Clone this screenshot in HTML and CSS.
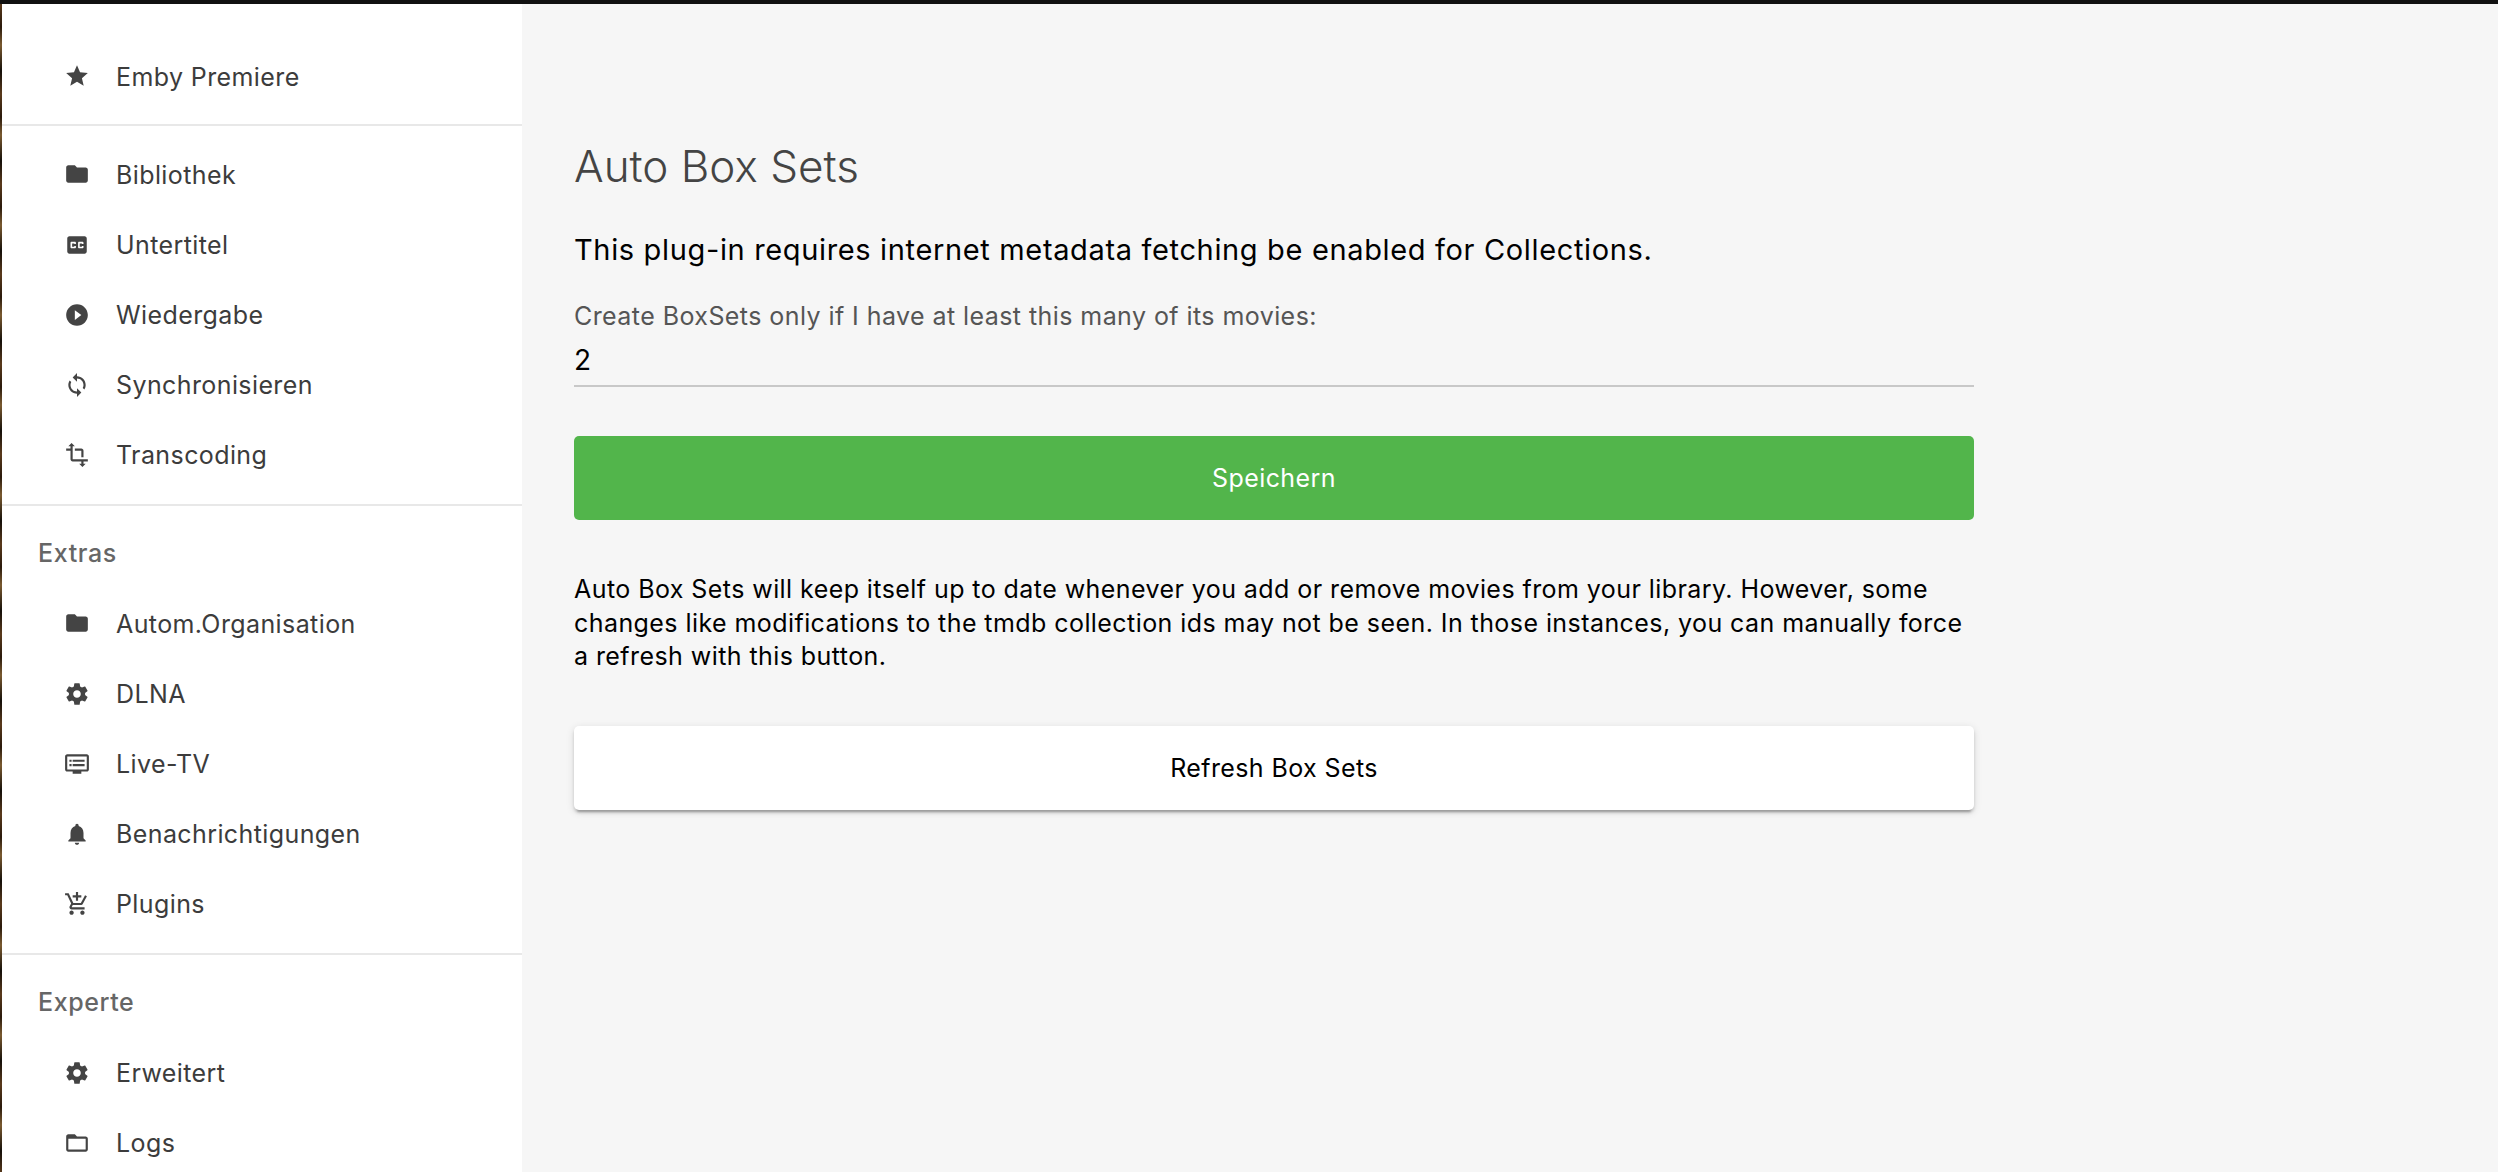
FILE: index.html
```html
<!DOCTYPE html>
<html lang="de">
<head>
    <meta charset="UTF-8">
    <title>Auto Box Sets</title>
    <link rel="stylesheet" href="styles.css">
</head>
<body>
    <div class="edge-top"></div>
    <div class="page">
        <div class="edge-left"></div>

        <nav class="sidebar">
            <div class="nav-group nav-group-first">
                <a class="nav-item"><svg class="nav-icon nav-icon-raised" viewBox="0 0 24 24"><path d="M12 17.27L18.18 21l-1.64-7.03L22 9.24l-7.19-.61L12 2 9.19 8.63 2 9.24l5.46 4.73L5.82 21z"/></svg>Emby Premiere</a>
            </div>
            <div class="nav-group">
                <a class="nav-item"><svg class="nav-icon nav-icon-raised" viewBox="0 0 24 24"><path d="M10 4H4c-1.1 0-1.99.9-1.99 2L2 18c0 1.1.9 2 2 2h16c1.1 0 2-.9 2-2V8c0-1.1-.9-2-2-2h-8l-2-2z"/></svg>Bibliothek</a>
                <a class="nav-item"><svg class="nav-icon" viewBox="0 0 24 24"><path d="M19 4H5c-1.11 0-2 .9-2 2v12c0 1.1.89 2 2 2h14c1.1 0 2-.9 2-2V6c0-1.1-.9-2-2-2zm-8 7H9.5v-.5h-2v3h2V13H11v1c0 .55-.45 1-1 1H7c-.55 0-1-.45-1-1v-4c0-.55.45-1 1-1h3c.55 0 1 .45 1 1v1zm7 0h-1.5v-.5h-2v3h2V13H18v1c0 .55-.45 1-1 1h-3c-.55 0-1-.45-1-1v-4c0-.55.45-1 1-1h3c.55 0 1 .45 1 1v1z"/></svg>Untertitel</a>
                <a class="nav-item"><svg class="nav-icon" viewBox="0 0 24 24"><path d="M12 2C6.48 2 2 6.48 2 12s4.48 10 10 10 10-4.48 10-10S17.52 2 12 2zm-2 14.5v-9l6 4.5-6 4.5z"/></svg>Wiedergabe</a>
                <a class="nav-item"><svg class="nav-icon" viewBox="0 0 24 24"><path d="M12 4V1L8 5l4 4V6c3.31 0 6 2.69 6 6 0 1.01-.25 1.97-.7 2.8l1.46 1.46C19.54 15.03 20 13.57 20 12c0-4.42-3.58-8-8-8zm0 14c-3.31 0-6-2.69-6-6 0-1.01.25-1.97.7-2.8L5.24 7.74C4.46 8.97 4 10.43 4 12c0 4.42 3.58 8 8 8v3l4-4-4-4v3z"/></svg>Synchronisieren</a>
                <a class="nav-item"><svg class="nav-icon" viewBox="0 0 24 24"><path d="M22 18v-2H8V4h2L7 1 4 4h2v2H2v2h4v8c0 1.1.9 2 2 2h8v2h-2l3 3 3-3h-2v-2h4zM10 8h6v6h2V8c0-1.1-.9-2-2-2h-6v2z"/></svg>Transcoding</a>
            </div>
            <div class="nav-group">
                <div class="nav-title">Extras</div>
                <a class="nav-item"><svg class="nav-icon nav-icon-raised" viewBox="0 0 24 24"><path d="M10 4H4c-1.1 0-1.99.9-1.99 2L2 18c0 1.1.9 2 2 2h16c1.1 0 2-.9 2-2V8c0-1.1-.9-2-2-2h-8l-2-2z"/></svg>Autom.Organisation</a>
                <a class="nav-item"><svg class="nav-icon" viewBox="0 0 24 24"><path d="M19.43 12.98c.04-.32.07-.64.07-.98s-.03-.66-.07-.98l2.11-1.65c.19-.15.24-.42.12-.64l-2-3.46c-.12-.22-.39-.3-.61-.22l-2.49 1c-.52-.4-1.08-.73-1.69-.98l-.38-2.65C14.46 2.18 14.25 2 14 2h-4c-.25 0-.46.18-.49.42l-.38 2.65c-.61.25-1.17.59-1.69.98l-2.49-1c-.23-.09-.49 0-.61.22l-2 3.46c-.13.22-.07.49.12.64l2.11 1.65c-.04.32-.07.65-.07.98s.03.66.07.98l-2.11 1.65c-.19.15-.24.42-.12.64l2 3.46c.12.22.39.3.61.22l2.49-1c.52.4 1.08.73 1.69.98l.38 2.65c.03.24.24.42.49.42h4c.25 0 .46-.18.49-.42l.38-2.65c.61-.25 1.17-.59 1.69-.98l2.49 1c.23.09.49 0 .61-.22l2-3.46c.12-.22.07-.49-.12-.64l-2.11-1.65zM12 15.5c-1.93 0-3.5-1.57-3.5-3.5s1.57-3.5 3.5-3.5 3.5 1.57 3.5 3.5-1.57 3.5-3.5 3.5z"/></svg>DLNA</a>
                <a class="nav-item"><svg class="nav-icon" viewBox="0 0 24 24"><path d="M21 3H3c-1.1 0-2 .9-2 2v12c0 1.1.9 2 2 2h5v2h8v-2h5c1.1 0 1.99-.9 1.99-2L23 5c0-1.1-.9-2-2-2zm0 14H3V5h18v12zm-2-9H8v2h11V8zm0 4H8v2h11v-2zM7 8H5v2h2V8zm0 4H5v2h2v-2z"/></svg>Live-TV</a>
                <a class="nav-item"><svg class="nav-icon" viewBox="0 0 24 24"><path d="M12 22c1.1 0 2-.9 2-2h-4c0 1.1.89 2 2 2zm6-6v-5c0-3.07-1.64-5.64-4.5-6.32V4c0-.83-.67-1.5-1.5-1.5s-1.5.67-1.5 1.5v.68C7.63 5.36 6 7.92 6 11v5l-2 2v1h16v-1l-2-2z"/></svg>Benachrichtigungen</a>
                <a class="nav-item"><svg class="nav-icon" viewBox="0 0 24 24"><path d="M11 9h2V6h3V4h-3V1h-2v3H8v2h3v3zm-4 9c-1.1 0-1.99.9-1.99 2S5.9 22 7 22s2-.9 2-2-.9-2-2-2zm10 0c-1.1 0-1.99.9-1.99 2s.89 2 1.99 2 2-.9 2-2-.9-2-2-2zm-9.83-3.25l.03-.12.9-1.63h7.45c.75 0 1.41-.41 1.75-1.03l3.86-7.01L19.42 4h-.01l-1.1 2-2.76 5H8.53l-.13-.27L6.16 6l-.95-2-.94-2H1v2h2l3.6 7.59-1.35 2.45c-.16.28-.25.61-.25.96 0 1.1.9 2 2 2h12v-2H7.42c-.13 0-.25-.11-.25-.25z"/></svg>Plugins</a>
            </div>
            <div class="nav-group">
                <div class="nav-title">Experte</div>
                <a class="nav-item"><svg class="nav-icon" viewBox="0 0 24 24"><path d="M19.43 12.98c.04-.32.07-.64.07-.98s-.03-.66-.07-.98l2.11-1.65c.19-.15.24-.42.12-.64l-2-3.46c-.12-.22-.39-.3-.61-.22l-2.49 1c-.52-.4-1.08-.73-1.69-.98l-.38-2.65C14.46 2.18 14.25 2 14 2h-4c-.25 0-.46.18-.49.42l-.38 2.65c-.61.25-1.17.59-1.69.98l-2.49-1c-.23-.09-.49 0-.61.22l-2 3.46c-.13.22-.07.49.12.64l2.11 1.65c-.04.32-.07.65-.07.98s.03.66.07.98l-2.11 1.65c-.19.15-.24.42-.12.64l2 3.46c.12.22.39.3.61.22l2.49-1c.52.4 1.08.73 1.69.98l.38 2.65c.03.24.24.42.49.42h4c.25 0 .46-.18.49-.42l.38-2.65c.61-.25 1.17-.59 1.69-.98l2.49 1c.23.09.49 0 .61-.22l2-3.46c.12-.22.07-.49-.12-.64l-2.11-1.65zM12 15.5c-1.93 0-3.5-1.57-3.5-3.5s1.57-3.5 3.5-3.5 3.5 1.57 3.5 3.5-1.57 3.5-3.5 3.5z"/></svg>Erweitert</a>
                <a class="nav-item"><svg class="nav-icon" viewBox="0 0 24 24"><path d="M20 6h-8l-2-2H4c-1.1 0-1.99.9-1.99 2L2 18c0 1.1.9 2 2 2h16c1.1 0 2-.9 2-2V8c0-1.1-.9-2-2-2zm0 12H4V8h16v10z"/></svg>Logs</a>
            </div>
        </nav>

        <main class="content">
            <h1>Auto Box Sets</h1>
            <p class="notice">This plug-in requires internet metadata fetching be enabled for Collections.</p>

            <label class="field-label" for="minMovies">Create BoxSets only if I have at least this many of its movies:</label>
            <input class="field-input" id="minMovies" type="text" value="2">

            <button class="btn btn-save">Speichern</button>

            <p class="description">Auto Box Sets will keep itself up to date whenever you add or remove movies from your library. However, some changes like modifications to the tmdb collection ids may not be seen. In those instances, you can manually force a refresh with this button.</p>

            <button class="btn btn-refresh">Refresh Box Sets</button>
        </main>
    </div>
</body>
</html>
```

FILE: styles.css
```css
* {
    margin: 0;
    padding: 0;
    box-sizing: border-box;
}

html, body {
    height: 100%;
    overflow: hidden;
}

body {
    font-family: Inter, "Noto Sans", sans-serif;
    background: #f6f6f6;
    display: flex;
    flex-direction: column;
}

.edge-top {
    height: 4px;
    background: #111;
    flex-shrink: 0;
}

.page {
    display: flex;
    flex: 1;
    min-height: 0;
}

.edge-left {
    width: 2px;
    flex-shrink: 0;
    background: repeating-linear-gradient(180deg, #5a3a1c 0, #2a1a0c 23px, #7a5a30 41px, #15100a 67px, #5a3a1c 90px);
}

.sidebar {
    width: 520px;
    flex-shrink: 0;
    background: #fff;
    overflow: hidden;
}

.nav-group {
    padding: 14px 0;
    border-bottom: 2px solid #e8e8e8;
}

.nav-group-first {
    padding: 38px 0 12px;
}

.nav-group:last-child {
    border-bottom: 0;
}

.nav-title {
    height: 69px;
    padding-left: 36px;
    font-size: 25px;
    font-weight: 500;
    letter-spacing: 0.6px;
    line-height: 66px;
    color: #666;
}

.nav-item {
    display: flex;
    align-items: center;
    height: 70px;
    padding-left: 62px;
    font-size: 25px;
    letter-spacing: 0.4px;
    color: #3c3c3c;
}

.nav-icon {
    width: 26px;
    height: 26px;
    margin-right: 26px;
    fill: #444;
    flex-shrink: 0;
}

.nav-icon-raised {
    margin-bottom: 3px;
}

.content {
    width: 1400px;
    margin-left: 52px;
    padding-top: 130px;
}

h1 {
    font-size: 44px;
    font-weight: 300;
    line-height: 64px;
    color: #444;
    margin-bottom: 32px;
}

.notice {
    font-size: 29px;
    letter-spacing: 0.65px;
    line-height: 40px;
    color: #000;
    margin-bottom: 28px;
}

.field-label {
    display: block;
    font-size: 25px;
    letter-spacing: 0.43px;
    line-height: 36px;
    color: #555;
}

.field-input {
    display: block;
    width: 100%;
    height: 53px;
    border: 0;
    border-bottom: 2px solid #c8c8c8;
    background: transparent;
    font-family: inherit;
    font-size: 28px;
    color: #000;
    outline: none;
    margin-bottom: 49px;
}

.btn {
    display: block;
    width: 100%;
    height: 84px;
    border: 0;
    border-radius: 5px;
    font-family: inherit;
    font-size: 25px;
    letter-spacing: 0.4px;
}

.btn-save {
    background: #52b54b;
    color: #fff;
    margin-bottom: 53px;
}

.description {
    font-size: 25px;
    letter-spacing: 0.43px;
    line-height: 33.5px;
    color: #000;
    margin-bottom: 52px;
}

.btn-refresh {
    background: #fff;
    color: #000;
    box-shadow: 0 3px 3px 0 rgba(0, 0, 0, 0.14), 0 2px 8px 0 rgba(0, 0, 0, 0.12), 0 5px 2px -3px rgba(0, 0, 0, 0.2);
}
```
